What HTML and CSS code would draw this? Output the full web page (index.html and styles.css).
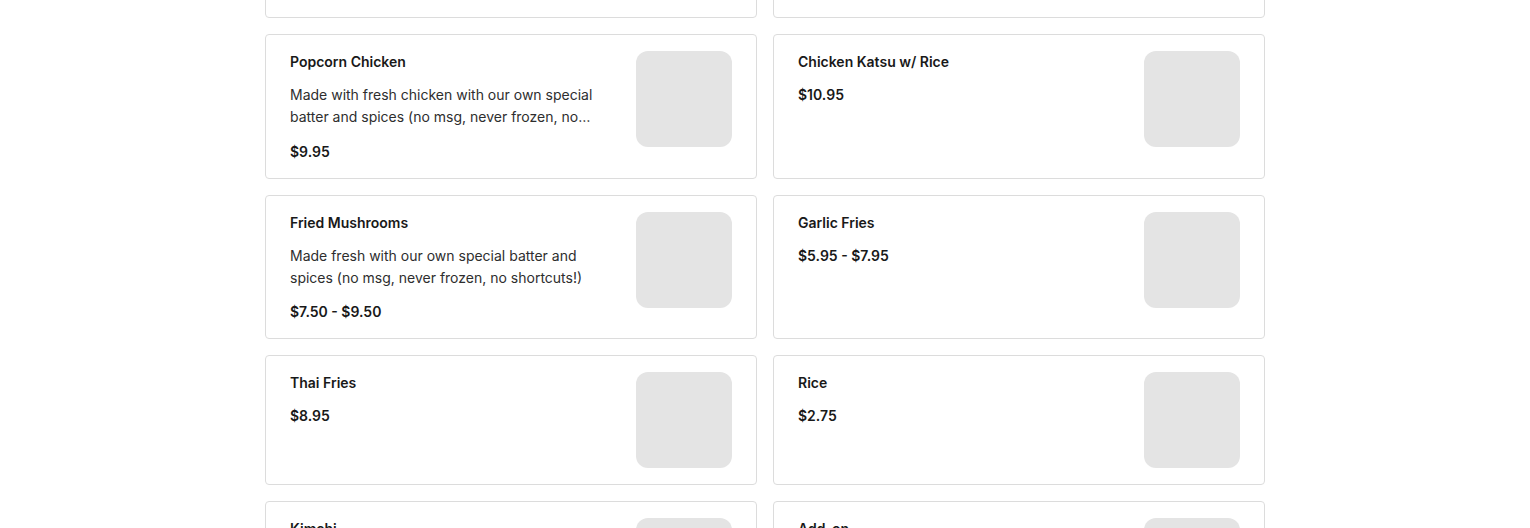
FILE: index.html
```html
<!DOCTYPE html>
<html lang="en">
<head>
  <meta charset="UTF-8" />
  <title>Menu</title>
  <meta name="viewport" content="width=device-width, initial-scale=1.0" />
  <link rel="stylesheet" href="styles.css">
</head>
<body>
  <div class="menu-grid">
    <div class="item">
      <div class="item-info">
        <div class="item-name">Chicken Wings</div>
        <div class="item-desc">Made with fresh chicken with our own special batter and spices (no msg, never frozen, no shortcuts!)</div>
        <div class="item-price">$9.95</div>
      </div>
      <div class="item-img"></div>
    </div>
    <div class="item">
      <div class="item-info">
        <div class="item-name">Chicken Sandwich</div>
        <div class="item-desc">Fresh fried chicken on a toasted bun with slaw and our house sauce.</div>
        <div class="item-price">$8.95</div>
      </div>
      <div class="item-img"></div>
    </div>

    <div class="item">
      <div class="item-info">
        <div class="item-name">Popcorn Chicken</div>
        <div class="item-desc">Made with fresh chicken with our own special batter and spices (no msg, never frozen, no shortcuts!)</div>
        <div class="item-price">$9.95</div>
      </div>
      <div class="item-img"></div>
    </div>
    <div class="item">
      <div class="item-info">
        <div class="item-name">Chicken Katsu w/ Rice</div>
        <div class="item-price">$10.95</div>
      </div>
      <div class="item-img"></div>
    </div>

    <div class="item">
      <div class="item-info">
        <div class="item-name">Fried Mushrooms</div>
        <div class="item-desc">Made fresh with our own special batter and spices (no msg, never frozen, no shortcuts!)</div>
        <div class="item-price">$7.50 - $9.50</div>
      </div>
      <div class="item-img"></div>
    </div>
    <div class="item">
      <div class="item-info">
        <div class="item-name">Garlic Fries</div>
        <div class="item-price">$5.95 - $7.95</div>
      </div>
      <div class="item-img"></div>
    </div>

    <div class="item">
      <div class="item-info">
        <div class="item-name">Thai Fries</div>
        <div class="item-price">$8.95</div>
      </div>
      <div class="item-img"></div>
    </div>
    <div class="item">
      <div class="item-info">
        <div class="item-name">Rice</div>
        <div class="item-price">$2.75</div>
      </div>
      <div class="item-img"></div>
    </div>

    <div class="item">
      <div class="item-info">
        <div class="item-name">Kimchi</div>
        <div class="item-price">$3.50</div>
      </div>
      <div class="item-img"></div>
    </div>
    <div class="item">
      <div class="item-info">
        <div class="item-name">Add-on</div>
        <div class="item-price">$1.00</div>
      </div>
      <div class="item-img"></div>
    </div>
  </div>
</body>
</html>
```

FILE: styles.css
```css
* {
  box-sizing: border-box;
}

body {
  margin: 0;
  background: #fff;
  color: #191919;
  font-family: Inter, "Noto Sans", sans-serif;
  overflow: hidden;
}

/* list is scrolled down a bit */
.menu-grid {
  width: 1000px;
  margin: -126.5px auto 0;
  display: grid;
  grid-template-columns: 1fr 1fr;
  gap: 16px;
}

.item {
  display: flex;
  gap: 24px;
  border: 1px solid #dcdcdc;
  border-radius: 4px;
  padding: 16px 24px;
  background: #fff;
}

.item-info {
  flex: 1;
  min-width: 0;
}

.item-name {
  font-size: 14px;
  font-weight: 600;
  line-height: 22px;
}

.item-desc {
  margin-top: 11px;
  font-size: 14px;
  line-height: 22px;
  color: #2e2e2e;
  display: -webkit-box;
  -webkit-line-clamp: 2;
  -webkit-box-orient: vertical;
  overflow: hidden;
}

.item-price {
  margin-top: 11px;
  font-size: 14px;
  font-weight: 600;
  line-height: 22px;
}

.item-desc + .item-price {
  margin-top: 12.5px;
  line-height: 21px;
}

.item-img {
  width: 96px;
  height: 96px;
  flex-shrink: 0;
  border-radius: 12px;
  background: #e4e4e4;
}
```
